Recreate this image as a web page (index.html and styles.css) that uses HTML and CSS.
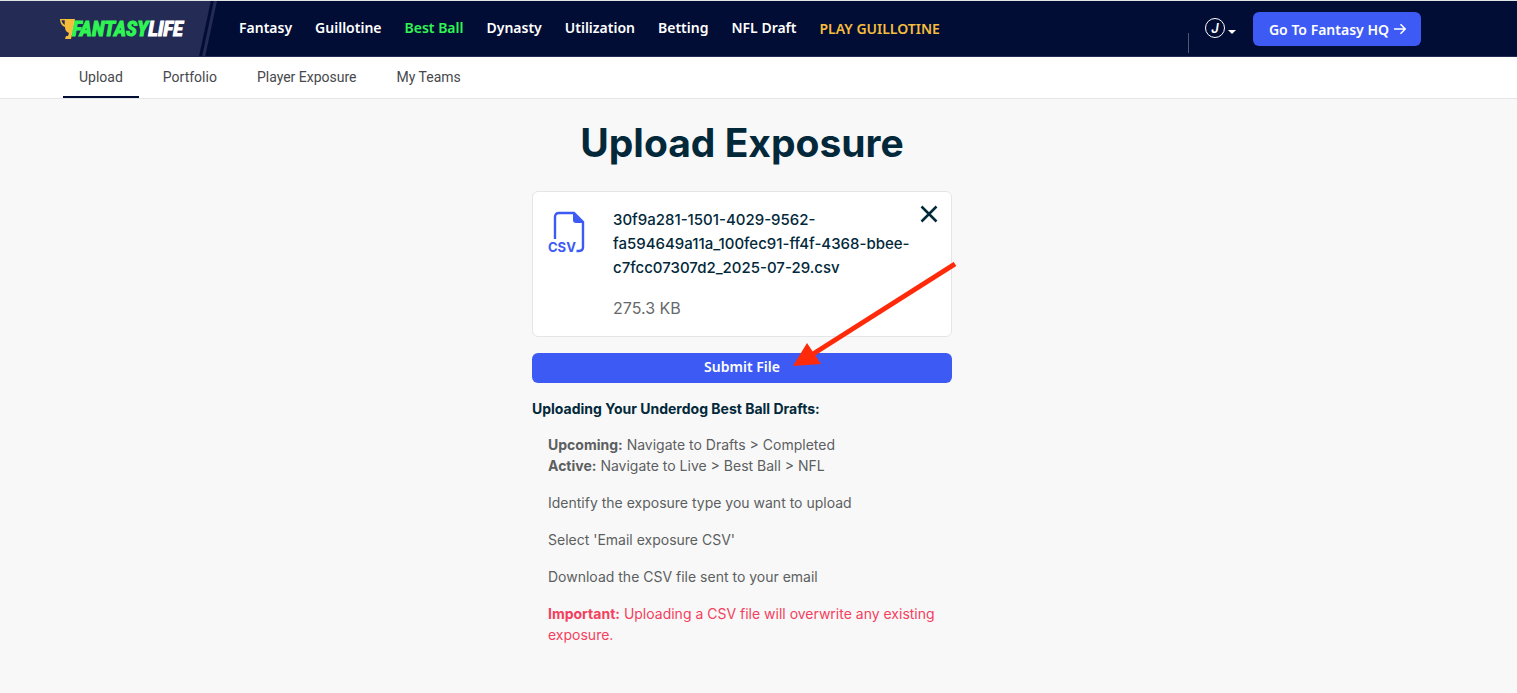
FILE: index.html
```html
<!DOCTYPE html>
<html lang="en">
<head>
<meta charset="utf-8">
<meta name="viewport" content="width=device-width, initial-scale=1">
<title>Upload Exposure</title>
<link rel="stylesheet" href="styles.css">
</head>
<body>
<header class="header">
  <a class="brand" href="#" aria-label="Fantasy Life">
    <svg class="trophy" viewBox="0 0 15 22" aria-hidden="true">
      <path d="M5 1h10l-4 20H5l1-3h2l1-3C6 14 5 12 5 9 2 8 0 5 0 1h5zM1.500 2.300C2 4.500 3 6 4.700 7V2.300z" fill="#f6bd3d" fill-rule="evenodd"/>
    </svg>
    <span class="wordmark"><span class="wordmark-green">FANTASY</span>LIFE</span>
  </a>
  <nav class="nav" aria-label="Main">
    <a href="#">Fantasy</a>
    <a href="#">Guillotine</a>
    <a class="nav-active" href="#">Best Ball</a>
    <a href="#">Dynasty</a>
    <a href="#">Utilization</a>
    <a href="#">Betting</a>
    <a href="#">NFL Draft</a>
    <a class="nav-play" href="#">PLAY GUILLOTINE</a>
  </nav>
  <div class="account">
    <span class="divider"></span>
    <button class="user" type="button" aria-label="Account menu"><span class="avatar">J</span><span class="caret"></span></button>
    <a class="hq" href="#">Go To Fantasy HQ
      <svg class="hq-arrow" viewBox="0 0 12 12" aria-hidden="true"><path d="M0 6h11M6.500 1.200 11.200 6l-4.700 4.800" fill="none" stroke="currentColor" stroke-width="1.500"/></svg>
    </a>
  </div>
</header>
<nav class="tabs" aria-label="Best Ball">
  <a class="tab tab-active" href="#">Upload</a>
  <a class="tab" href="#">Portfolio</a>
  <a class="tab" href="#">Player Exposure</a>
  <a class="tab" href="#">My Teams</a>
</nav>
<main class="main">
  <div class="column">
    <h1 class="title">Upload Exposure</h1>
    <section class="card">
      <svg class="csv" viewBox="0 0 40 44" aria-hidden="true">
        <path d="M8 28V6q0-4 4-4h15l9 9v25q0 4-4 4h-2.500" fill="none" stroke="#3d5af5" stroke-width="2.400"/>
        <path d="M26 1.500 36.500 12H29q-3 0-3-3z" fill="#3d5af5"/>
        <text class="csv-text" x="1" y="41">CSV</text>
      </svg>
      <div class="file">
        <p class="file-name">30f9a281-1501-4029-9562-<br>fa594649a11a_100fec91-ff4f-4368-bbee-<br>c7fcc07307d2_2025-07-29.csv</p>
        <p class="file-size">275.3 KB</p>
      </div>
      <button class="close" type="button" aria-label="Remove file">
        <svg viewBox="0 0 18 18" aria-hidden="true"><path d="M1.500 1.500l15 15M16.500 1.500l-15 15" fill="none" stroke="#02283a" stroke-width="2.500"/></svg>
      </button>
    </section>
    <button class="submit" type="button">Submit File</button>
    <svg class="pointer" viewBox="0 0 164 106" aria-hidden="true">
      <path d="M162 2 20 92" stroke="#ff2a0a" stroke-width="5" fill="none"/>
      <path d="M0 104 14 81 28 102z" fill="#ff2a0a"/>
    </svg>
    <h2 class="subtitle">Uploading Your Underdog Best Ball Drafts:</h2>
    <div class="steps">
      <p><b>Upcoming:</b> Navigate to Drafts &gt; Completed<br><b>Active:</b> Navigate to Live &gt; Best Ball &gt; NFL</p>
      <p>Identify the exposure type you want to upload</p>
      <p>Select 'Email exposure CSV'</p>
      <p>Download the CSV file sent to your email</p>
      <p class="warning"><b>Important:</b> Uploading a CSV file will overwrite any existing exposure.</p>
    </div>
  </div>
</main>
</body>
</html>
```
FILE: styles.css
```css
* { box-sizing: border-box; }
body {
  margin: 0;
  background: #f8f8f8;
  color: #02283a;
  font-family: Inter, "Liberation Sans", sans-serif;
}
a { color: inherit; text-decoration: none; }
button { border: 0; padding: 0; background: none; color: inherit; font: inherit; cursor: pointer; }
h1, h2, p { margin: 0; }

.header {
  display: flex;
  align-items: stretch;
  height: 57px;
  padding-right: 96px;
  border-top: 1px solid #dfe4e4;
  border-bottom: 1px solid #242b55;
  background: #020d36;
  color: #fff;
  font-family: "Noto Sans", sans-serif;
  font-size: 14px;
  font-weight: 600;
}
.brand {
  display: flex;
  align-items: center;
  width: 217px;
  padding-left: 60px;
  background: linear-gradient(102deg, #242b55 calc(100% - 18px), #020d36 calc(100% - 17px), #020d36 calc(100% - 15px), #242b55 calc(100% - 14px), #242b55 calc(100% - 12px), #020d36 calc(100% - 11px));
}
.trophy { width: 15px; height: 22px; flex: none; margin-right: -3px; }
.wordmark {
  font-family: "Liberation Sans Narrow", "Roboto Condensed", "Liberation Sans", sans-serif;
  font-size: 21px;
  font-weight: 700;
  font-style: italic;
  -webkit-text-stroke: 1px currentColor;
}
.wordmark-green { color: #2ff553; }
.nav { display: flex; align-items: center; gap: 23px; padding: 0 0 2px 22px; white-space: nowrap; }
.nav-active { color: #2ff553; }
.nav-play { margin-top: 2px; color: #f6bd3d; }
.account { display: flex; align-items: center; margin-left: auto; }
.divider { width: 1px; height: 20px; margin: 28px 16px 0 0; background: #4b5a70; }
.user { display: flex; align-items: center; gap: 3px; margin-right: 17px; padding-bottom: 2px; }
.avatar {
  width: 20px;
  height: 20px;
  border: 1px solid #fff;
  border-radius: 50%;
  font-family: Inter, sans-serif;
  font-size: 13px;
  font-style: italic;
  font-weight: 600;
  line-height: 18px;
}
.caret { margin-top: 8px; border: 4px solid transparent; border-top-color: #fff; border-bottom: 0; }
.hq {
  display: flex;
  align-items: center;
  gap: 5px;
  height: 34px;
  padding: 1px 15px 0 16px;
  border-radius: 6px;
  background: #3d5af5;
  white-space: nowrap;
}
.hq-arrow { width: 12px; height: 12px; }

.tabs {
  display: flex;
  gap: 8px;
  height: 42px;
  padding-left: 63px;
  border-bottom: 1px solid #e3e5e6;
  background: #fff;
  color: #46484b;
  font-family: Roboto, sans-serif;
  font-size: 14px;
  line-height: 40px;
}
.tab { padding: 0 16px; }
.tab-active { border-bottom: 2px solid #020d36; }

.main { display: flex; justify-content: center; padding: 20px 33px 48px 0; }
.column { position: relative; width: 420px; }
.title { font-size: 39px; font-weight: 700; line-height: 48px; text-align: center; white-space: nowrap; }
.card {
  display: flex;
  align-items: flex-start;
  margin-top: 24px;
  padding: 16px 13px 16px 14px;
  border: 1px solid #e3e5e6;
  border-radius: 6px;
  background: #fff;
}
.csv { width: 40px; height: 44px; flex: none; margin: 3px 26px 0 0; }
.csv-text { fill: #3d5af5; font: 700 13px Inter, sans-serif; }
.file { flex: 1; min-width: 0; white-space: nowrap; }
.file-name { font-size: 15px; font-weight: 500; line-height: 24px; }
.file-size { margin-top: 16px; color: #66696b; font-size: 16px; line-height: 24px; }
.close { width: 18px; height: 18px; flex: none; margin-top: -3px; }
.close svg { display: block; width: 18px; height: 18px; }
.submit {
  width: 100%;
  height: 30px;
  margin-top: 16px;
  padding-bottom: 3px;
  border-radius: 6px;
  background: #3d5af5;
  color: #fff;
  font: 600 14px "Noto Sans", sans-serif;
}
.pointer { position: absolute; top: 143px; left: 261px; width: 164px; height: 106px; pointer-events: none; }
.subtitle { margin-top: 16px; font-size: 14px; font-weight: 700; line-height: 20px; }
.steps { display: grid; gap: 16px; margin-top: 15px; padding-left: 16px; color: #5c5f61; font-size: 14px; line-height: 21px; }
.warning { color: #f43f5e; }
```
